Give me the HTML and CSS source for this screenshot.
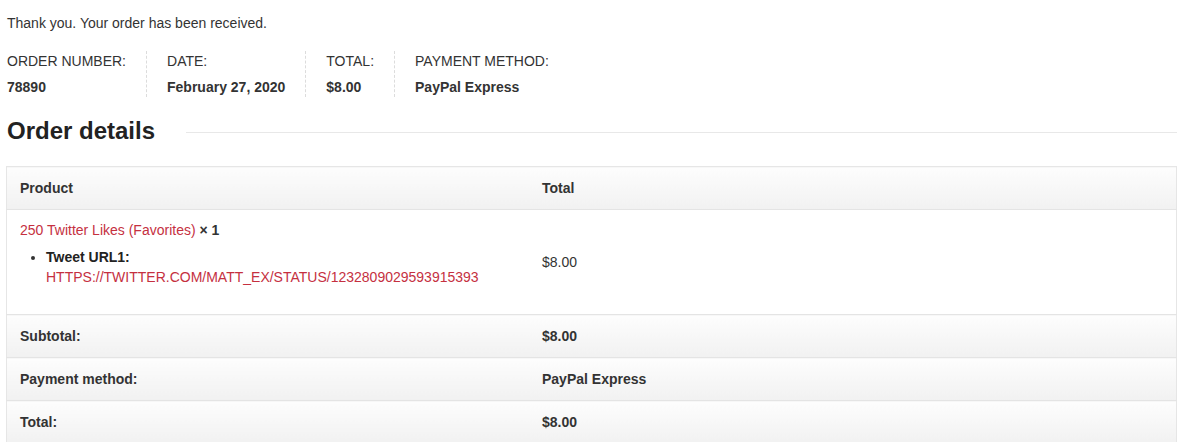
FILE: index.html
```html
<!DOCTYPE html>
<html lang="en">
<head>
  <meta charset="UTF-8">
  <title>Order received</title>
  <link rel="stylesheet" href="styles.css">
</head>
<body>
  <div class="order-page">
    <p class="thanks">Thank you. Your order has been received.</p>

    <ul class="order-overview">
      <li>Order number:<strong>78890</strong></li>
      <li>Date:<strong>February 27, 2020</strong></li>
      <li>Total:<strong>$8.00</strong></li>
      <li>Payment method:<strong>PayPal Express</strong></li>
    </ul>

    <h2 class="section-title">Order details</h2>

    <table class="order-details">
      <thead>
        <tr>
          <th class="col-product">Product</th>
          <th>Total</th>
        </tr>
      </thead>
      <tbody>
        <tr>
          <td class="col-product">
            <a href="#">250 Twitter Likes (Favorites)</a> <strong>&times;&nbsp;1</strong>
            <ul class="item-meta">
              <li><strong>Tweet URL1:</strong><br><a href="#" class="meta-link">https://twitter.com/matt_ex/status/1232809029593915393</a></li>
            </ul>
          </td>
          <td class="price">$8.00</td>
        </tr>
      </tbody>
      <tfoot>
        <tr>
          <th class="col-product">Subtotal:</th>
          <td>$8.00</td>
        </tr>
        <tr>
          <th class="col-product">Payment method:</th>
          <td>PayPal Express</td>
        </tr>
        <tr>
          <th class="col-product">Total:</th>
          <td>$8.00</td>
        </tr>
      </tfoot>
    </table>
  </div>
</body>
</html>
```

FILE: styles.css
```css
body {
  margin: 0;
  font-family: "Liberation Sans", Arial, sans-serif;
  font-size: 14px;
  line-height: 20px;
  color: #333;
}

a {
  color: #c5303f;
  text-decoration: none;
}

.order-page {
  padding: 0 5px 0 6px;
}

.thanks {
  margin: 0;
  padding: 13px 0 0 1px;
}

.order-overview {
  list-style: none;
  display: flex;
  margin: 18px 0 0;
  padding: 0;
  text-transform: uppercase;
}

.order-overview li {
  padding: 0 20px;
  border-right: 1px dashed #dcdcdc;
}

.order-overview li:first-child {
  padding-left: 1px;
}

.order-overview li:last-child {
  border-right: none;
}

.order-overview strong {
  display: block;
  margin-top: 6px;
  text-transform: none;
  color: #333;
}

.section-title {
  display: flex;
  align-items: center;
  margin: 19px 0 20px;
  padding-left: 1px;
  font-size: 24px;
  line-height: 30px;
  color: #222;
}

.section-title::after {
  content: "";
  flex: 1;
  margin-left: 31px;
  margin-top: 2px;
  border-top: 1px solid #e8e8e8;
}

.order-details {
  width: 100%;
  border-collapse: collapse;
  border: 1px solid #e6e6e6;
}

.order-details th,
.order-details td {
  padding: 11px 13px;
  text-align: left;
  vertical-align: middle;
  border-bottom: 1px solid #e4e4e4;
}

.order-details .col-product {
  width: 496px;
}

.order-details thead th,
.order-details tfoot th,
.order-details tfoot td {
  font-weight: bold;
  background: linear-gradient(#fdfdfd, #f1f1f1);
}

.order-details tbody td {
  background: #fff;
}

.order-details tbody .col-product {
  padding-top: 10px;
}

.item-meta {
  margin: 7px 0 16px;
  padding-left: 26px;
}

.item-meta strong {
  color: #222;
}

.meta-link {
  text-transform: uppercase;
}
```
